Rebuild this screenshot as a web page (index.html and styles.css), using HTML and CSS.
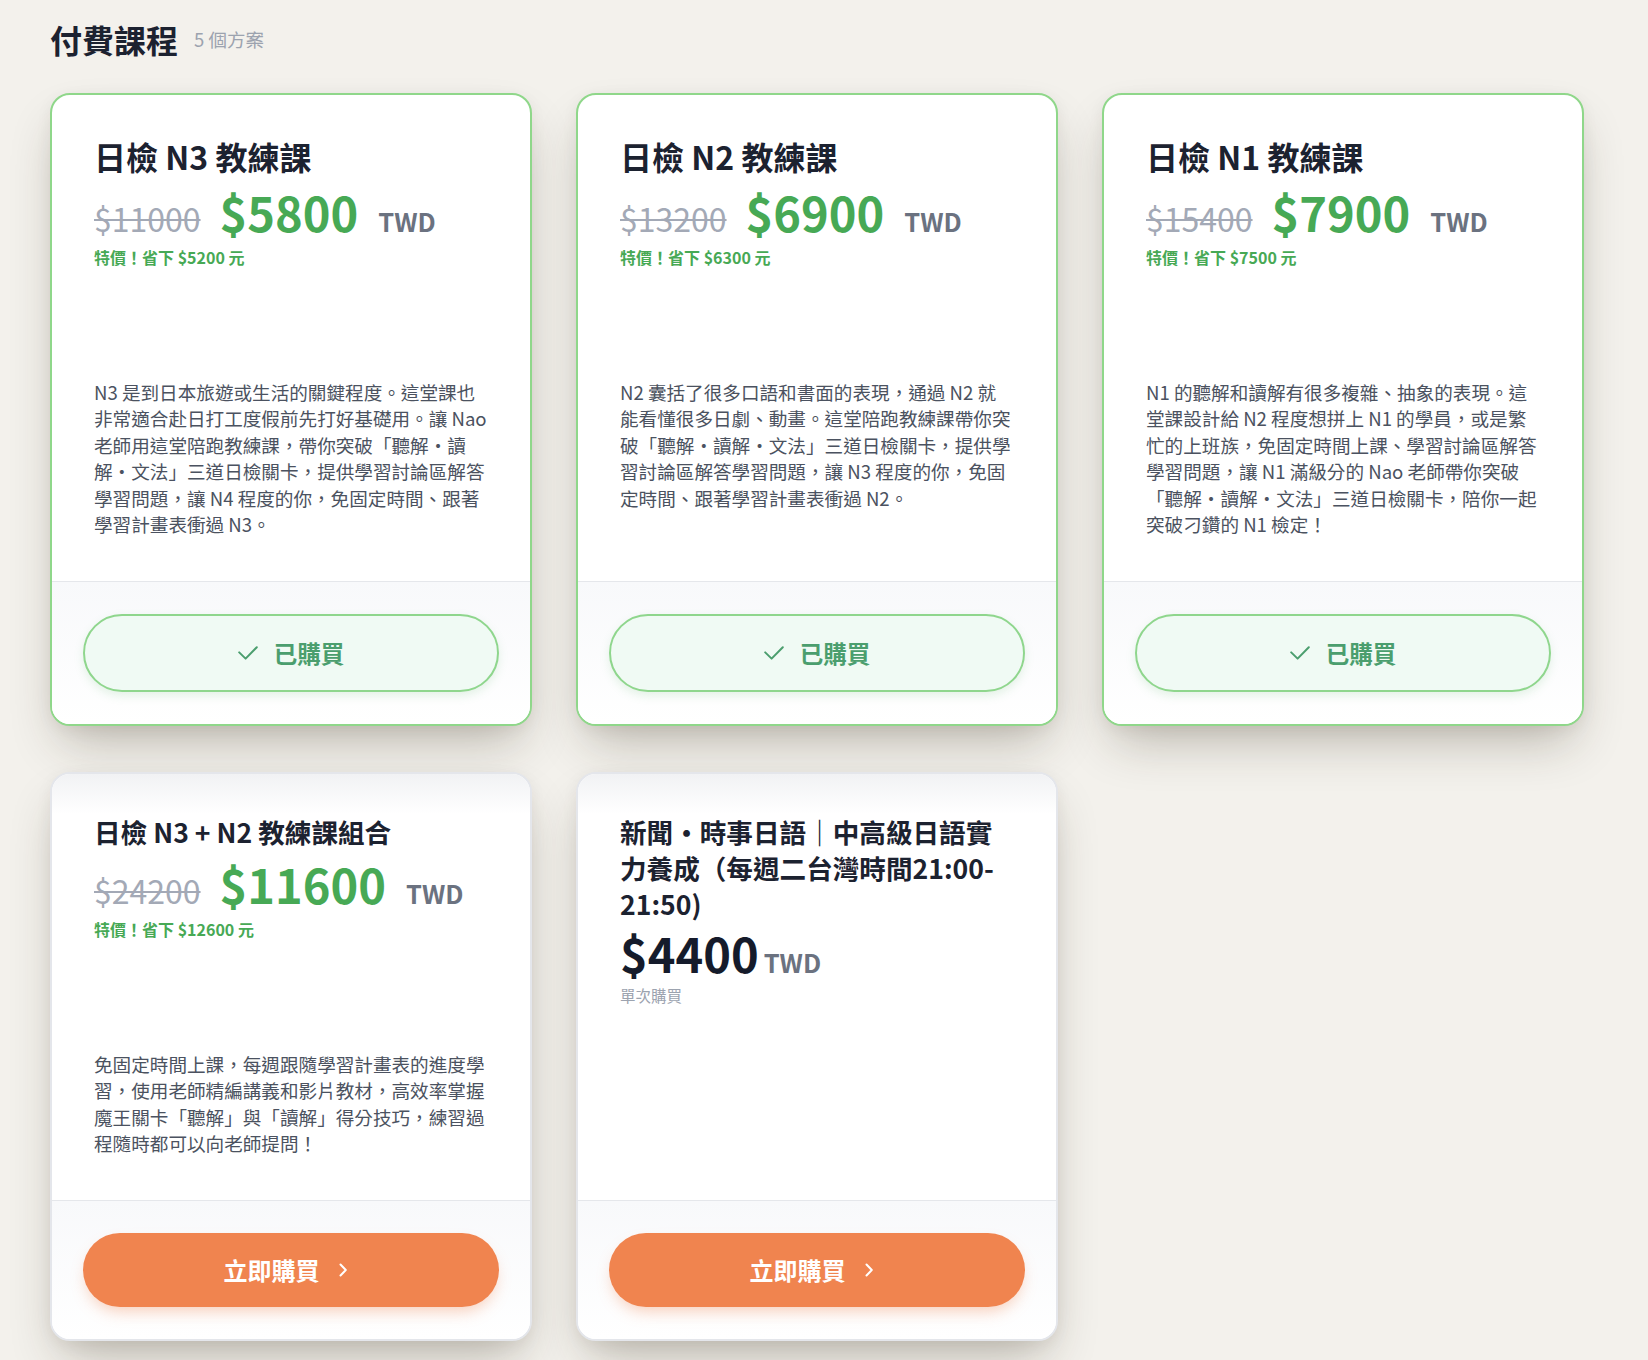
FILE: index.html
```html
<!DOCTYPE html>
<html lang="zh-Hant">
<head>
<meta charset="utf-8">
<title>付費課程</title>
<link rel="stylesheet" href="styles.css">
</head>
<body>
<main class="page">
  <div class="page-head">
    <h2 class="page-title">付費課程</h2>
    <span class="page-count">5 個方案</span>
  </div>

  <div class="grid">
    <div class="card card--owned">
      <div class="card-body">
        <h3 class="card-title">日檢 N3 教練課</h3>
        <div class="price-row">
          <span class="price-old">$11000</span>
          <span class="price-new">$5800</span>
          <span class="price-cur">TWD</span>
        </div>
        <div class="price-note">特價！省下 $5200 元</div>
        <p class="card-desc">N3 是到日本旅遊或生活的關鍵程度。這堂課也非常適合赴日打工度假前先打好基礎用。讓 Nao 老師用這堂陪跑教練課，帶你突破「聽解・讀解・文法」三道日檢關卡，提供學習討論區解答學習問題，讓 N4 程度的你，免固定時間、跟著學習計畫表衝過 N3。</p>
      </div>
      <div class="card-foot">
        <div class="btn btn--owned">
          <svg class="icon-check" width="20" height="14" viewBox="0 0 20 14" fill="none"><path d="M1.2 6.4 L7.6 12.6 L18.8 1.2" stroke="currentColor" stroke-width="2" stroke-linecap="round" stroke-linejoin="round"/></svg>
          <span>已購買</span>
        </div>
      </div>
    </div>

    <div class="card card--owned">
      <div class="card-body">
        <h3 class="card-title">日檢 N2 教練課</h3>
        <div class="price-row">
          <span class="price-old">$13200</span>
          <span class="price-new">$6900</span>
          <span class="price-cur">TWD</span>
        </div>
        <div class="price-note">特價！省下 $6300 元</div>
        <p class="card-desc">N2 囊括了很多口語和書面的表現，通過 N2 就能看懂很多日劇、動畫。這堂陪跑教練課帶你突破「聽解・讀解・文法」三道日檢關卡，提供學習討論區解答學習問題，讓 N3 程度的你，免固定時間、跟著學習計畫表衝過 N2。</p>
      </div>
      <div class="card-foot">
        <div class="btn btn--owned">
          <svg class="icon-check" width="20" height="14" viewBox="0 0 20 14" fill="none"><path d="M1.2 6.4 L7.6 12.6 L18.8 1.2" stroke="currentColor" stroke-width="2" stroke-linecap="round" stroke-linejoin="round"/></svg>
          <span>已購買</span>
        </div>
      </div>
    </div>

    <div class="card card--owned">
      <div class="card-body">
        <h3 class="card-title">日檢 N1 教練課</h3>
        <div class="price-row">
          <span class="price-old">$15400</span>
          <span class="price-new">$7900</span>
          <span class="price-cur">TWD</span>
        </div>
        <div class="price-note">特價！省下 $7500 元</div>
        <p class="card-desc">N1 的聽解和讀解有很多複雜、抽象的表現。這堂課設計給 N2 程度想拼上 N1 的學員，或是繁忙的上班族，免固定時間上課、學習討論區解答學習問題，讓 N1 滿級分的 Nao 老師帶你突破「聽解・讀解・文法」三道日檢關卡，陪你一起突破刁鑽的 N1 檢定！</p>
      </div>
      <div class="card-foot">
        <div class="btn btn--owned">
          <svg class="icon-check" width="20" height="14" viewBox="0 0 20 14" fill="none"><path d="M1.2 6.4 L7.6 12.6 L18.8 1.2" stroke="currentColor" stroke-width="2" stroke-linecap="round" stroke-linejoin="round"/></svg>
          <span>已購買</span>
        </div>
      </div>
    </div>

    <div class="card card--plain">
      <div class="card-body">
        <h3 class="card-title card-title--sm">日檢 N3 + N2 教練課組合</h3>
        <div class="price-row">
          <span class="price-old">$24200</span>
          <span class="price-new">$11600</span>
          <span class="price-cur">TWD</span>
        </div>
        <div class="price-note">特價！省下 $12600 元</div>
        <p class="card-desc">免固定時間上課，每週跟隨學習計畫表的進度學習，使用老師精編講義和影片教材，高效率掌握魔王關卡「聽解」與「讀解」得分技巧，練習過程隨時都可以向老師提問！</p>
      </div>
      <div class="card-foot">
        <div class="btn btn--buy">
          <span>立即購買</span>
          <svg class="icon-chev" width="27" height="16" viewBox="0 0 27 16" fill="none"><path d="M8.5 2.5 L13.8 8 L8.5 13.5" stroke="currentColor" stroke-width="2" stroke-linecap="round" stroke-linejoin="round"/></svg>
        </div>
      </div>
    </div>

    <div class="card card--plain">
      <div class="card-body">
        <h3 class="card-title card-title--sm">新聞・時事日語｜中高級日語實力養成（每週二台灣時間21:00-21:50)</h3>
        <div class="price-row price-row--single">
          <span class="price-main">$4400</span>
          <span class="price-cur">TWD</span>
        </div>
        <div class="price-sub">單次購買</div>
      </div>
      <div class="card-foot">
        <div class="btn btn--buy">
          <span>立即購買</span>
          <svg class="icon-chev" width="27" height="16" viewBox="0 0 27 16" fill="none"><path d="M8.5 2.5 L13.8 8 L8.5 13.5" stroke="currentColor" stroke-width="2" stroke-linecap="round" stroke-linejoin="round"/></svg>
        </div>
      </div>
    </div>
  </div>
</main>
</body>
</html>
```

FILE: styles.css
```css
* { box-sizing: border-box; }

html, body {
  margin: 0;
  background: #f3f1ec;
}

body {
  font-family: "Noto Sans CJK TC", "Noto Sans", sans-serif;
  color: #1f2533;
}

.page {
  padding: 19px 0 40px 50px;
}

.page-head {
  display: flex;
  align-items: center;
  gap: 16px;
  margin-bottom: 32px;
}

.page-title {
  margin: 0;
  font-size: 32px;
  font-weight: 700;
  line-height: 1.3;
  color: #1c2230;
}

.page-count {
  font-size: 18.5px;
  line-height: 1.5;
  color: #9ca3af;
}

.grid {
  display: grid;
  grid-template-columns: repeat(3, 482px);
  column-gap: 44px;
  row-gap: 46px;
}

.card {
  display: flex;
  flex-direction: column;
  border: 2px solid #e4e6eb;
  border-radius: 20px;
  background: #fff;
  overflow: hidden;
  box-shadow: 0 25px 50px -12px rgba(50, 40, 20, 0.3), 0 4px 16px rgba(50, 40, 20, 0.06);
}

.card--owned {
  border-color: #8fd78a;
}

.card-body {
  flex: 1;
  padding: 40px 42px 43px 42px;
}

.card--plain .card-body {
  background: linear-gradient(to bottom, #f1f2f4 0, #ffffff 40px);
}

.card-title {
  margin: 0;
  font-size: 32px;
  font-weight: 700;
  line-height: 1.35;
  color: #1c2230;
}

.card-title--sm {
  font-size: 26.6px;
}

.price-row {
  display: flex;
  align-items: baseline;
  margin-top: 10px;
  line-height: 1;
}

.price-old {
  font-size: 32px;
  color: #a3a9b6;
  text-decoration: line-through;
  text-decoration-thickness: 2px;
  margin-right: 19px;
}

.price-new {
  font-size: 47px;
  font-weight: 700;
  color: #47a955;
  margin-right: 20px;
}

.price-cur {
  font-size: 25.5px;
  font-weight: 700;
  color: #6b7280;
}

.price-note {
  margin-top: 10px;
  font-size: 16px;
  font-weight: 700;
  line-height: 1.5;
  color: #47a955;
}

.price-row--single {
  margin-top: 8px;
}

.price-main {
  font-size: 47px;
  font-weight: 700;
  color: #151b2b;
  margin-right: 5px;
}

.price-sub {
  margin-top: 10px;
  font-size: 15.5px;
  line-height: 1.2;
  color: #9ca3af;
}

.card-desc {
  margin: 110px 0 0;
  font-size: 18.6px;
  line-height: 26.5px;
  color: #4b5260;
}

.card-foot {
  border-top: 1px solid #e5e7eb;
  padding: 32px 31px;
  background: linear-gradient(to bottom, #f8f9fb, #ffffff);
}

.btn {
  height: 74px;
  border-radius: 999px;
  display: flex;
  align-items: center;
  justify-content: center;
  font-size: 23.5px;
  font-weight: 700;
}

.btn--owned {
  height: 78px;
  border: 2px solid #8fd68d;
  background: #f0faf4;
  color: #4b9e6e;
  gap: 16px;
  box-shadow: 0 4px 10px rgba(110, 190, 120, 0.18);
}

.btn--buy {
  background: #f0844f;
  color: #ffffff;
  font-size: 24px;
  gap: 12px;
  box-shadow: 0 8px 16px -4px rgba(240, 132, 79, 0.4);
}

.icon-check,
.icon-chev {
  display: block;
  flex: none;
}
```
